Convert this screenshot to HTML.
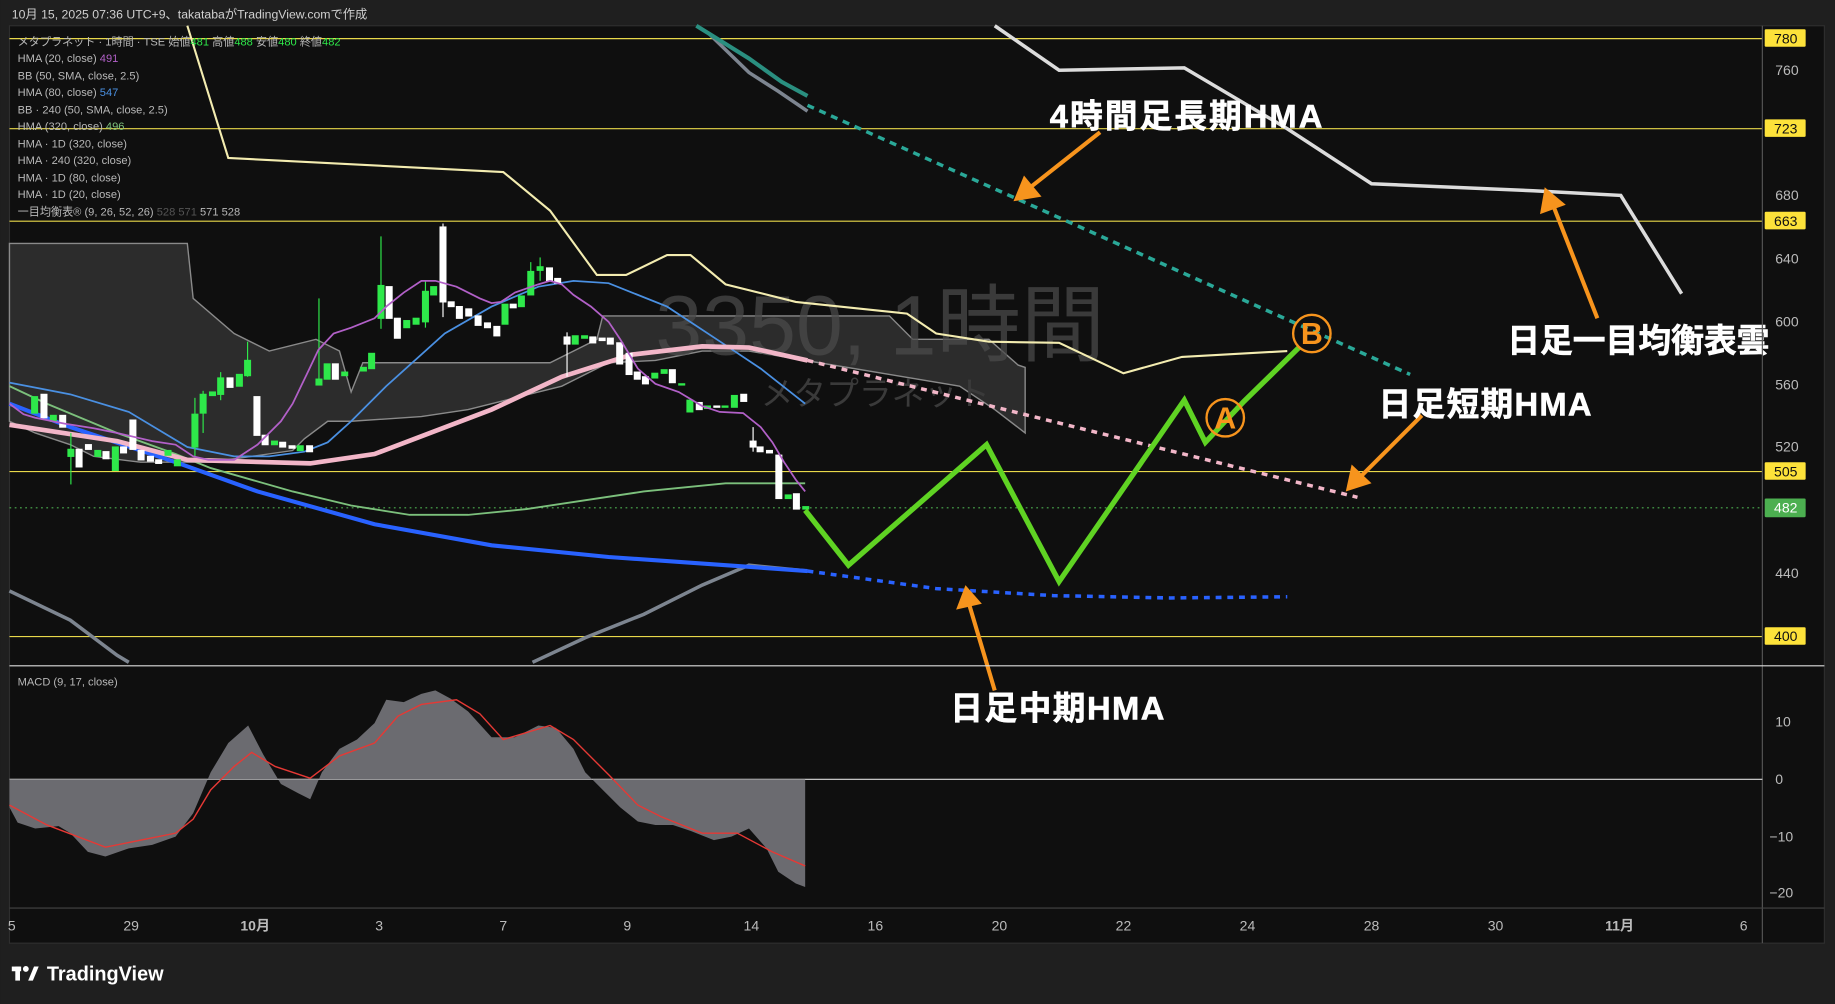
<!DOCTYPE html>
<html><head><meta charset="utf-8"><style>
html,body{margin:0;padding:0;background:#1f1f1f;overflow:hidden}
svg{display:block}
text{font-family:"Liberation Sans","Noto Sans CJK JP",sans-serif}
</style></head><body>
<svg width="1835" height="1004" viewBox="0 0 1568 858" xmlns="http://www.w3.org/2000/svg">
<rect x="0" y="0" width="1568" height="858" fill="#1f1f1f"/>
<rect x="8" y="22" width="1551" height="784" fill="#0f0f0f" stroke="#2e2e2e"/>
<text x="10" y="16" font-size="10.5" fill="#d0d0d0">10月 15, 2025 07:36 UTC+9、takatabaがTradingView.comで作成</text>

<polygon points="8,208 160,208 165,255 200,285 230,300 270,290 290,300 300,335 310,310 470,310 510,290 515,270 760,270 780,290 845,290 870,312 876,314 876,370 850,350 820,330 760,320 700,310 640,300 600,300 560,308 520,310 480,330 440,340 400,350 360,356 300,360 280,360 260,375 250,385 180,395 120,395 80,390 60,380 30,370 8,360" fill="#2c2c2c" stroke="#8a8a8a" stroke-width="1.2"/>
<text x="560" y="303" font-size="72" fill="#4a4a4a" fill-opacity="0.75">3350, 1時間</text>
<text x="650" y="346" font-size="28" fill="#3a3a3a">メタプラネット</text>

<g stroke="#e8d84a" stroke-width="1">
<line x1="8" y1="33" x2="1506" y2="33"/><line x1="8" y1="110" x2="1506" y2="110"/>
<line x1="8" y1="189" x2="1506" y2="189"/><line x1="8" y1="403" x2="1506" y2="403"/>
<line x1="8" y1="544" x2="1506" y2="544"/></g>
<line x1="8" y1="434" x2="1506" y2="434" stroke="#4caf50" stroke-width="1" stroke-dasharray="1.5,3"/>

<polyline points="8,505 60,530 100,560 110,566" fill="none" stroke="#7d8590" stroke-width="3"/>
<polyline points="455,566 500,545 550,525 600,500 640,483 690,488" fill="none" stroke="#7d8590" stroke-width="3"/>
<polyline points="605,28 640,62 665,78 690,95" fill="none" stroke="#7d8590" stroke-width="3"/>
<polyline points="595,22 640,50 668,70 690,82" fill="none" stroke="#2a8f80" stroke-width="3.5"/>
<line x1="690" y1="90" x2="1205" y2="320" stroke="#2aa898" stroke-width="3" stroke-dasharray="6,5"/>

<polyline points="160,22 195,135 430,147 470,180 510,235 535,235 570,218 590,218 620,243 680,258 775,268 800,285 845,292 905,293 960,319 1010,305 1100,300" fill="none" stroke="#f3ecb0" stroke-width="1.8"/>
<polyline points="850,22 905,60 1012,58 1100,110 1172,157 1310,163 1385,167 1437,251" fill="none" stroke="#dcdcdc" stroke-width="3"/>

<polyline points="8,330 40,345 100,370 150,388 180,400 250,420 300,432 350,440 400,440 450,435 550,420 620,413 688,413" fill="none" stroke="#7cc07c" stroke-width="1.6"/>
<polyline points="8,345 60,365 150,395 220,420 320,448 420,466 520,476 620,483 690,488" fill="none" stroke="#2962ff" stroke-width="3.5"/>
<polyline points="690,488 800,503 900,509 1000,511 1100,510" fill="none" stroke="#2962ff" stroke-width="3" stroke-dasharray="5,5"/>
<polyline points="8,327 60,337 110,352 160,382 200,390 230,390 260,386 280,378 300,360 330,330 380,285 420,262 460,245 490,240 520,242 570,262 620,295 650,315 688,345" fill="none" stroke="#4a90e2" stroke-width="1.5"/>
<polyline points="8,363 100,377 160,393 265,396 320,388 420,350 480,322 540,303 600,296 640,297 690,308" fill="none" stroke="#f2b6c8" stroke-width="4"/>
<line x1="690" y1="308" x2="1160" y2="425" stroke="#f2b6c8" stroke-width="3" stroke-dasharray="5,5"/>

<g stroke-width="1">
<g fill="#2ee84a" stroke="#2ee84a">
<rect x="27" y="339" width="5" height="14"/><rect x="43" y="355" width="5" height="5"/><rect x="58" y="384" width="5" height="6"/><line x1="60.5" y1="370" x2="60.5" y2="414"/>
<rect x="81" y="385" width="5" height="5"/><rect x="96" y="382" width="5" height="20"/><rect x="141" y="385" width="5" height="4"/><rect x="149" y="393" width="5" height="5"/>
<rect x="164" y="354" width="5" height="28"/><line x1="166.5" y1="340" x2="166.5" y2="390"/><rect x="171" y="337" width="5" height="16"/><line x1="173.5" y1="334" x2="173.5" y2="370"/>
<rect x="179" y="335" width="5" height="3"/><rect x="186" y="323" width="5" height="14"/><line x1="188.5" y1="318" x2="188.5" y2="342"/><rect x="202" y="320" width="5" height="10"/><rect x="209" y="308" width="5" height="13"/><line x1="211.5" y1="292" x2="211.5" y2="322"/>
<rect x="232" y="377" width="5" height="3"/><rect x="254" y="381" width="5" height="4"/>
<rect x="270" y="324" width="5" height="5"/><line x1="272.5" y1="255" x2="272.5" y2="329"/><rect x="277" y="311" width="5" height="13"/><rect x="292" y="318" width="5" height="3"/><rect x="308" y="314" width="5" height="3"/><rect x="315" y="302" width="5" height="13"/>
<rect x="323" y="244" width="5" height="28"/><line x1="325.5" y1="202" x2="325.5" y2="281"/><rect x="345" y="274" width="5" height="6"/><rect x="353" y="272" width="5" height="5"/><rect x="361" y="249" width="5" height="26"/><line x1="363.5" y1="240" x2="363.5" y2="280"/><rect x="368" y="245" width="5" height="7"/>
<rect x="429" y="260" width="5" height="17"/><rect x="443" y="253" width="5" height="9"/><rect x="451" y="232" width="5" height="20"/><line x1="453.5" y1="224" x2="453.5" y2="252"/><rect x="459" y="228" width="5" height="3"/><line x1="461.5" y1="220" x2="461.5" y2="240"/>
<rect x="489" y="287" width="5" height="7"/><rect x="497" y="287" width="5" height="2"/><rect x="557" y="319" width="5" height="4"/><rect x="565" y="316" width="5" height="3"/><rect x="580" y="328" width="5" height="1"/>
<rect x="587" y="342" width="5" height="10"/><rect x="602" y="347" width="5" height="2"/><rect x="617" y="347" width="5" height="1"/><rect x="625" y="338" width="5" height="10"/><rect x="671" y="423" width="5" height="3"/><rect x="686" y="433" width="5" height="2"/>
</g>
<g fill="#ffffff" stroke="#ffffff">
<rect x="35" y="337" width="5" height="20"/><rect x="51" y="355" width="5" height="10"/><rect x="65" y="384" width="5" height="15"/><rect x="73" y="380" width="5" height="4"/><rect x="88" y="386" width="5" height="6"/>
<rect x="103" y="382" width="5" height="5"/><rect x="111" y="359" width="5" height="25"/><rect x="118" y="385" width="5" height="8"/><rect x="126" y="390" width="5" height="4"/><rect x="133" y="393" width="5" height="3"/>
<rect x="194" y="323" width="5" height="8"/><rect x="217" y="339" width="5" height="33"/><rect x="224" y="372" width="5" height="8"/><rect x="239" y="378" width="5" height="4"/><rect x="247" y="381" width="5" height="2"/><rect x="262" y="381" width="5" height="5"/>
<rect x="284" y="311" width="5" height="13"/><rect x="330" y="245" width="5" height="27"/><rect x="337" y="272" width="5" height="17"/>
<rect x="376" y="194" width="5" height="64"/><line x1="378.5" y1="191" x2="378.5" y2="271"/><rect x="383" y="258" width="5" height="4"/><rect x="390" y="262" width="5" height="10"/><rect x="398" y="264" width="5" height="6"/><rect x="406" y="270" width="5" height="8"/><rect x="414" y="276" width="5" height="4"/><rect x="422" y="279" width="5" height="8"/>
<rect x="436" y="260" width="5" height="3"/><rect x="467" y="229" width="5" height="11"/><rect x="474" y="238" width="5" height="4"/>
<rect x="482" y="288" width="5" height="6"/><line x1="484.5" y1="284" x2="484.5" y2="322"/><rect x="504" y="288" width="5" height="5"/><rect x="512" y="289" width="5" height="2"/><rect x="519" y="289" width="5" height="5"/>
<rect x="527" y="293" width="5" height="18"/><rect x="535" y="302" width="5" height="18"/><rect x="542" y="318" width="5" height="6"/><rect x="549" y="322" width="5" height="6"/><rect x="572" y="316" width="5" height="11"/>
<rect x="595" y="344" width="5" height="6"/><rect x="610" y="347" width="5" height="1"/><rect x="633" y="337" width="5" height="6"/>
<rect x="641" y="377" width="5" height="5"/><line x1="643.5" y1="365" x2="643.5" y2="386"/><rect x="647" y="382" width="5" height="4"/><rect x="655" y="385" width="5" height="2"/><rect x="663" y="389" width="5" height="37"/><rect x="678" y="422" width="5" height="13"/>
</g></g>

<polyline points="8,345 20,354 30,357 55,362 80,366 100,370 130,377 150,380 165,390 178,393 200,393 220,380 240,360 250,345 262,320 272,299 285,285 300,280 320,272 330,262 345,250 360,240 372,240 390,245 410,255 420,259 428,258 440,250 460,243 470,240 480,243 490,252 505,262 520,275 530,290 545,315 560,328 580,335 600,347 615,352 635,353 650,365 660,378 670,395 680,410 688,420" fill="none" stroke="#b260c8" stroke-width="1.5"/>

<polyline points="688,436 725,483 843,380 905,497 1012,342 1030,378 1063,343 1110,297" fill="none" stroke="#5fd323" stroke-width="4.5"/>

<g font-weight="bold" font-size="26" fill="#f7941d" text-anchor="middle">
<circle cx="1047" cy="357" r="16" fill="none" stroke="#f7941d" stroke-width="2"/>
<text x="1047" y="366">A</text>
<circle cx="1121" cy="285" r="16" fill="none" stroke="#f7941d" stroke-width="2"/>
<text x="1121" y="294">B</text>
</g>

<g stroke="#f7941d" stroke-width="3.5" fill="#f7941d">
<line x1="940" y1="113" x2="878" y2="162"/><polygon points="866,172 875,150 890,168" stroke="none"/>
<line x1="1365" y1="272" x2="1327" y2="175"/><polygon points="1320,160 1316,183 1338,175" stroke="none"/>
<line x1="1215" y1="355" x2="1162" y2="408"/><polygon points="1150,420 1155,397 1172,413" stroke="none"/>
<line x1="850" y1="590" x2="828" y2="516"/><polygon points="825,500 817,521 839,516" stroke="none"/>
</g>
<g font-weight="bold" font-size="28" fill="#ffffff" stroke="#ffffff" stroke-width="0.5">
<text x="897" y="109" textLength="233">4時間足長期HMA</text>
<text x="1288" y="301" textLength="224">日足一目均衡表雲</text>
<text x="1178" y="355" textLength="182">日足短期HMA</text>
<text x="812" y="615" textLength="183">日足中期HMA</text>
</g>

<g font-size="9.5" fill="#b8b8b8">
<text x="15" y="39">メタプラネット · 1時間 · TSE  始値<tspan fill="#2ee84a">481</tspan>  高値<tspan fill="#2ee84a">488</tspan>  安値<tspan fill="#2ee84a">480</tspan>  終値<tspan fill="#2ee84a">482</tspan></text>
<text x="15" y="53">HMA (20, close)  <tspan fill="#b260c8">491</tspan></text>
<text x="15" y="68">BB (50, SMA, close, 2.5)</text>
<text x="15" y="82">HMA (80, close)  <tspan fill="#4a90e2">547</tspan></text>
<text x="15" y="97">BB · 240 (50, SMA, close, 2.5)</text>
<text x="15" y="111">HMA (320, close)  <tspan fill="#7cc07c">496</tspan></text>
<text x="15" y="126">HMA · 1D (320, close)</text>
<text x="15" y="140">HMA · 240 (320, close)</text>
<text x="15" y="155">HMA · 1D (80, close)</text>
<text x="15" y="169">HMA · 1D (20, close)</text>
<text x="15" y="184">一目均衡表® (9, 26, 52, 26)  <tspan fill="#555">528  571</tspan>  571  528</text>
</g>

<line x1="1506" y1="22" x2="1506" y2="806" stroke="#555" stroke-width="1"/>
<line x1="8" y1="569" x2="1559" y2="569" stroke="#dddddd" stroke-width="1"/>
<line x1="8" y1="776" x2="1559" y2="776" stroke="#444" stroke-width="1"/>
<line x1="8" y1="666" x2="1506" y2="666" stroke="#dddddd" stroke-width="1"/>
<g font-size="12" fill="#bbbbbb">
<text x="1517" y="64">760</text><text x="1517" y="171">680</text><text x="1517" y="225">640</text><text x="1517" y="279">600</text><text x="1517" y="333">560</text><text x="1517" y="386">520</text><text x="1517" y="494">440</text>
<text x="1517" y="621">10</text><text x="1517" y="670">0</text><text x="1512" y="719">−10</text><text x="1512" y="767">−20</text>
</g>
<g font-size="12">
<rect x="1508" y="25" width="35" height="15" fill="#fde23a" rx="1"/><text x="1516" y="37" fill="#111">780</text>
<rect x="1508" y="102" width="35" height="15" fill="#fde23a" rx="1"/><text x="1516" y="114" fill="#111">723</text>
<rect x="1508" y="181" width="35" height="15" fill="#fde23a" rx="1"/><text x="1516" y="193" fill="#111">663</text>
<rect x="1508" y="395" width="35" height="15" fill="#fde23a" rx="1"/><text x="1516" y="407" fill="#111">505</text>
<rect x="1508" y="426" width="35" height="16" fill="#4caf50" rx="1"/><text x="1516" y="438" fill="#fff">482</text>
<rect x="1508" y="536" width="35" height="15" fill="#fde23a" rx="1"/><text x="1516" y="548" fill="#111">400</text>
</g>

<text x="15" y="586" font-size="9.5" fill="#b8b8b8">MACD (9, 17, close)</text>
<polygon points="8,666 8,690 15,703 30,708 50,706 60,712 75,728 90,732 110,725 130,722 150,715 165,695 180,660 195,635 212,620 225,645 240,670 255,678 265,683 275,660 290,640 305,632 320,618 330,598 345,600 360,593 372,590 385,597 400,608 420,630 440,630 460,620 475,622 490,640 500,660 515,675 530,690 545,702 560,705 575,705 590,710 610,718 625,715 640,708 655,725 665,745 680,755 688,758 688,666" fill="#6b6b70"/>
<polyline points="8,688 40,705 90,724 150,712 165,700 180,675 200,655 215,643 235,655 265,665 290,646 320,635 340,612 360,602 390,598 410,610 430,632 470,620 490,632 520,662 545,688 565,698 600,712 630,712 660,728 688,740" fill="none" stroke="#e53935" stroke-width="1.2"/>

<g font-size="12" fill="#bbbbbb" text-anchor="middle">
<text x="10" y="795">5</text><text x="112" y="795">29</text><text x="218" y="795" font-weight="bold">10月</text><text x="324" y="795">3</text><text x="430" y="795">7</text><text x="536" y="795">9</text><text x="642" y="795">14</text><text x="748" y="795">16</text><text x="854" y="795">20</text><text x="960" y="795">22</text><text x="1066" y="795">24</text><text x="1172" y="795">28</text><text x="1278" y="795">30</text><text x="1384" y="795" font-weight="bold">11月</text><text x="1490" y="795">6</text>
</g>

<g fill="#ffffff">
<rect x="10" y="826" width="8" height="4"/><rect x="13" y="826" width="4" height="12"/>
<circle cx="22" cy="828" r="2.5"/><polygon points="24,838 29,826 33,826 28,838"/>
<text x="40" y="838" font-size="17" font-weight="bold">TradingView</text>
</g>
</svg>
</body></html>
